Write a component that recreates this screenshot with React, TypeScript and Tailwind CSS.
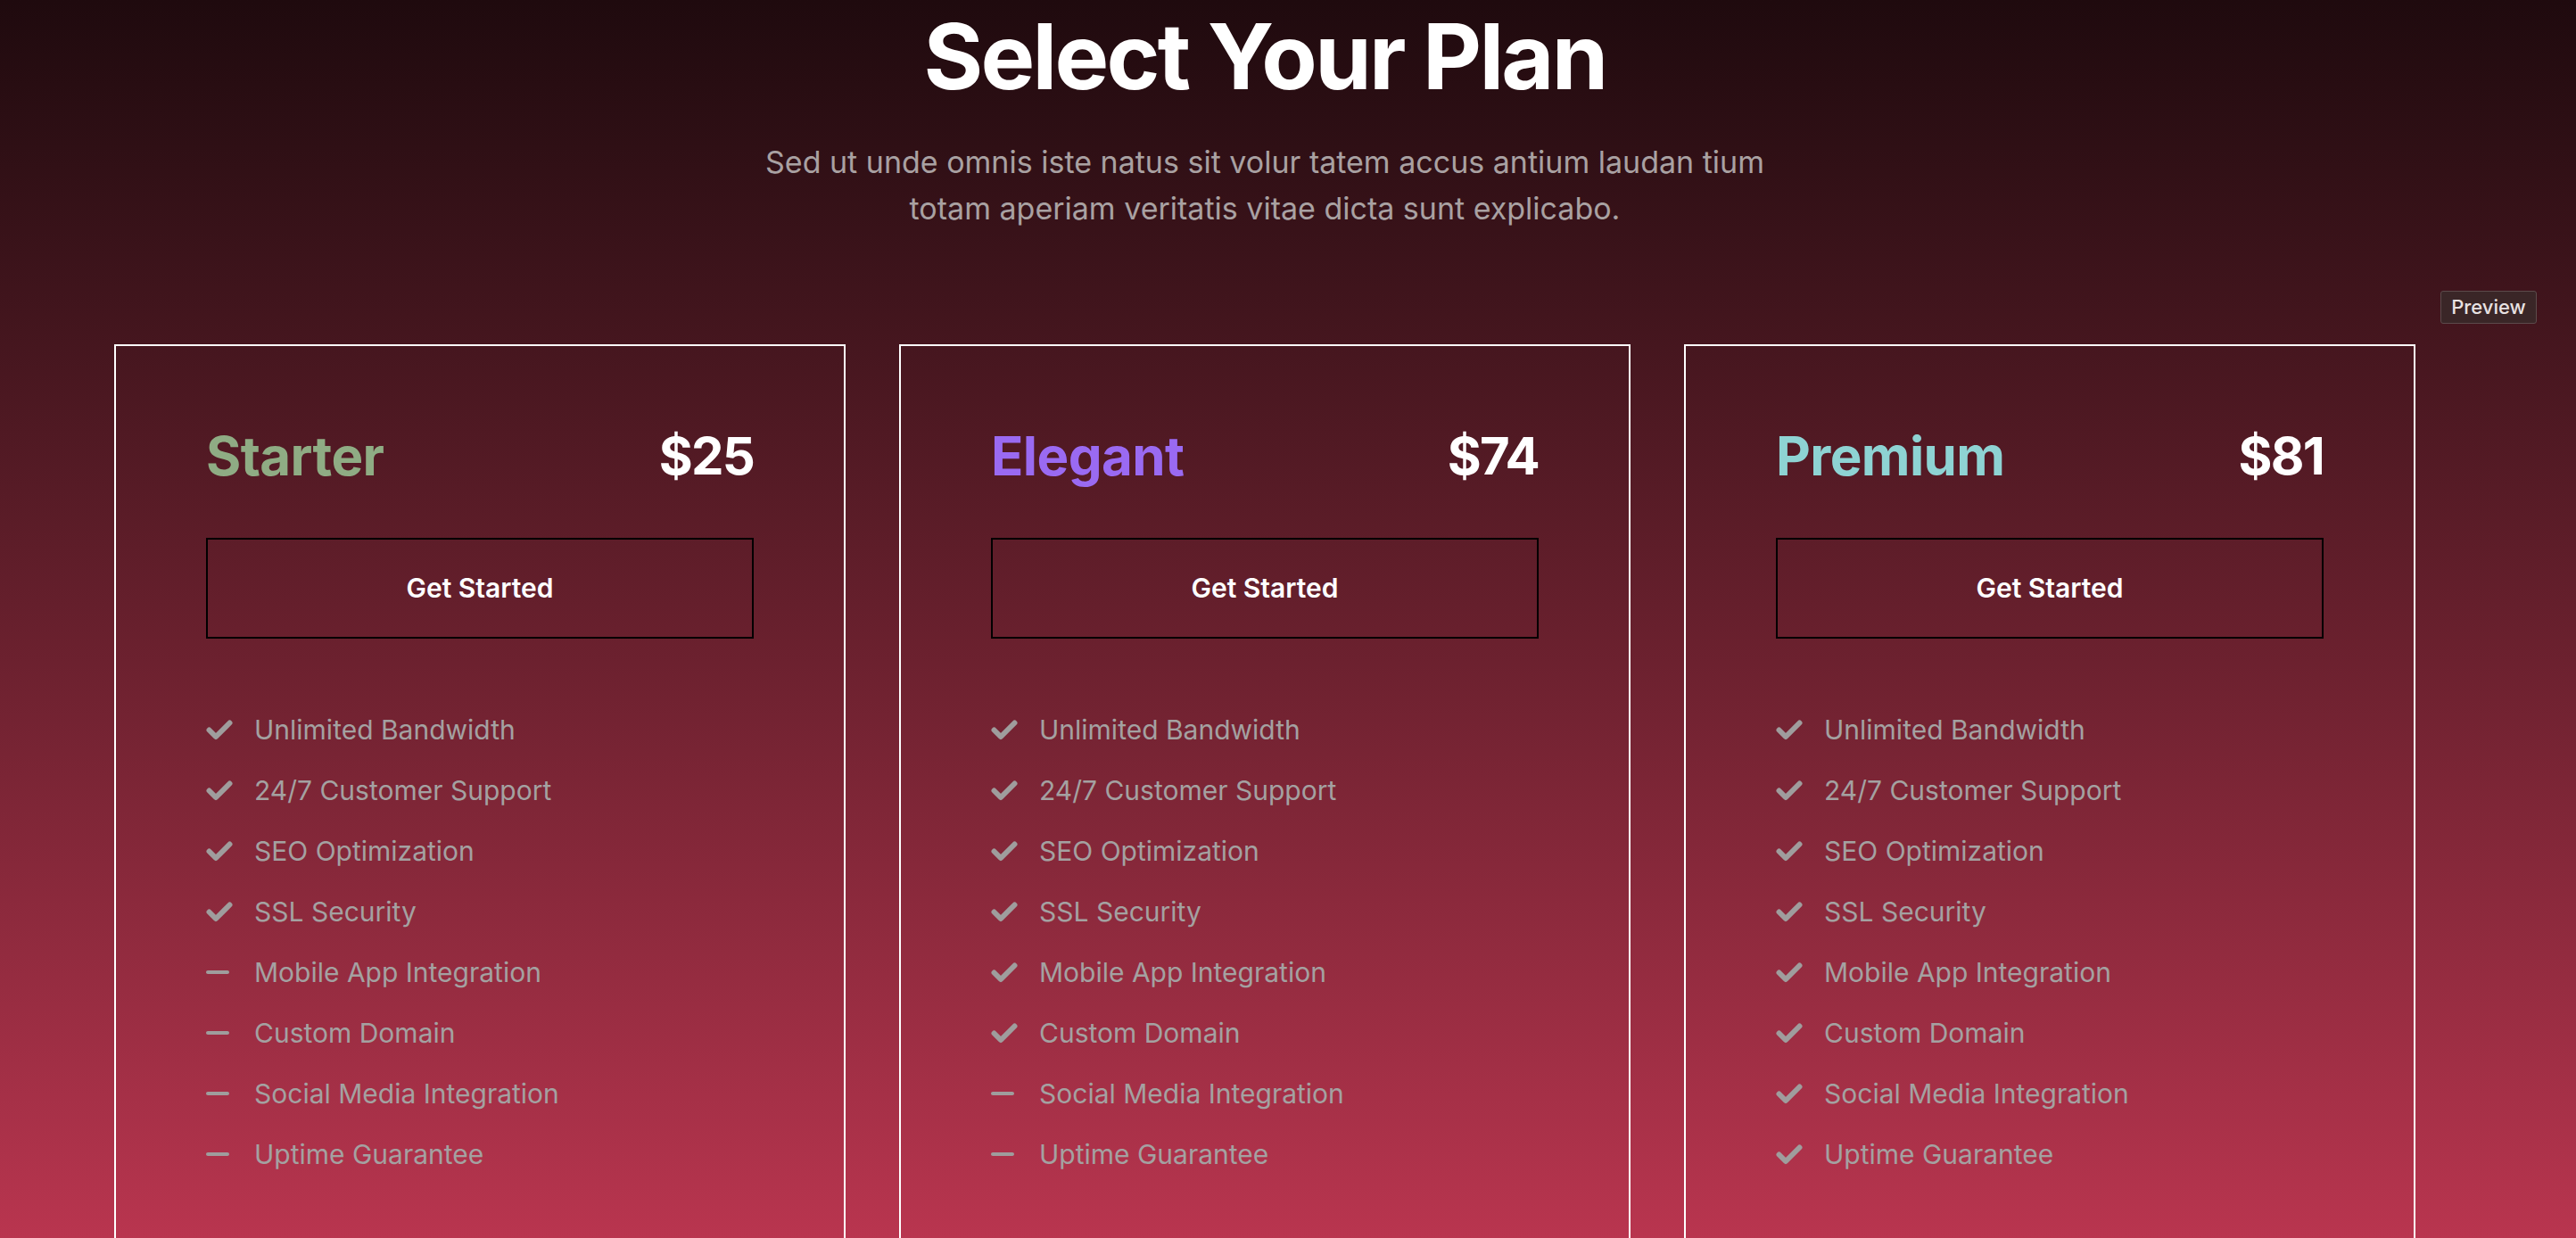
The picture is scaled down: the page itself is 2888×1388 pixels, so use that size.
import { FaMinus } from "react-icons/fa6"

type Plan = {
  name: string
  price: number
  color: string
  included: number
}

const features = [
  "Unlimited Bandwidth",
  "24/7 Customer Support",
  "SEO Optimization",
  "SSL Security",
  "Mobile App Integration",
  "Custom Domain",
  "Social Media Integration",
  "Uptime Guarantee",
]

const plans: Plan[] = [
  { name: "Starter", price: 25, color: "text-[#8fac84]", included: 4 },
  { name: "Elegant", price: 74, color: "text-[#9a6af2]", included: 6 },
  { name: "Premium", price: 81, color: "text-[#8ed3d3]", included: 8 },
]

function CheckIcon() {
  return (
    <svg width="30" height="23" viewBox="0 0 30 23" fill="none">
      <polyline
        points="3.5,11.5 11,19 26.5,3.5"
        stroke="currentColor"
        strokeWidth="6"
        strokeLinecap="round"
        strokeLinejoin="round"
      />
    </svg>
  )
}

function PlanCard({ plan }: { plan: Plan }) {
  return (
    <div className="border-2 border-white px-[101px] pt-[93px] pb-[120px]">
      <div className="flex items-center justify-between font-bold leading-none">
        <span className={`text-[60px] tracking-[-0.01em] ${plan.color}`}>{plan.name}</span>
        <span className="text-[58px] tracking-[-0.03em] text-white">${plan.price}</span>
      </div>

      <button className="mt-[62px] flex h-[113px] w-full items-center justify-center border-2 border-black text-[30px] font-semibold text-white">
        Get Started
      </button>

      <ul className="mt-[68px]">
        {features.map((f, i) => (
          <li key={f} className="flex h-[68px] items-center text-[30px] text-[#a4a1a1]">
            <span className="flex w-[54px] items-center text-[#9f9d9d]">
              {i < plan.included ? <CheckIcon /> : <FaMinus size={32} className="-ml-[3px]" />}
            </span>
            {f}
          </li>
        ))}
      </ul>
    </div>
  )
}

export default function App() {
  return (
    <div className="relative h-[1388px] w-full overflow-hidden bg-gradient-to-b from-[#1f0a0e] to-[#b9354f] font-['Inter','Noto_Sans',sans-serif]">
      <div className="flex w-[2836px] flex-col items-center">
        <h1 className="text-[102px] font-bold leading-[1.24] tracking-[-0.027em] text-white">
          Select Your Plan
        </h1>
        <p className="mt-[30px] max-w-[1160px] text-center text-[34px] leading-[52px] text-[#a9a1a2]">
          Sed ut unde omnis iste natus sit volur tatem accus antium laudan tium totam aperiam veritatis vitae dicta sunt explicabo.
        </p>

        {/* cards */}
        <div className="mt-[126px] grid w-[2580px] grid-cols-3 gap-[60px]">
          {plans.map((p) => (
            <PlanCard key={p.name} plan={p} />
          ))}
        </div>
      </div>

      <div className="absolute left-[2736px] top-[326px] flex h-[37px] w-[108px] items-center justify-center rounded-[3px] border border-[#5c4a4b] bg-[#3a2627] text-[22px] font-medium text-[#e8e2e2]">
        Preview
      </div>
    </div>
  )
}
